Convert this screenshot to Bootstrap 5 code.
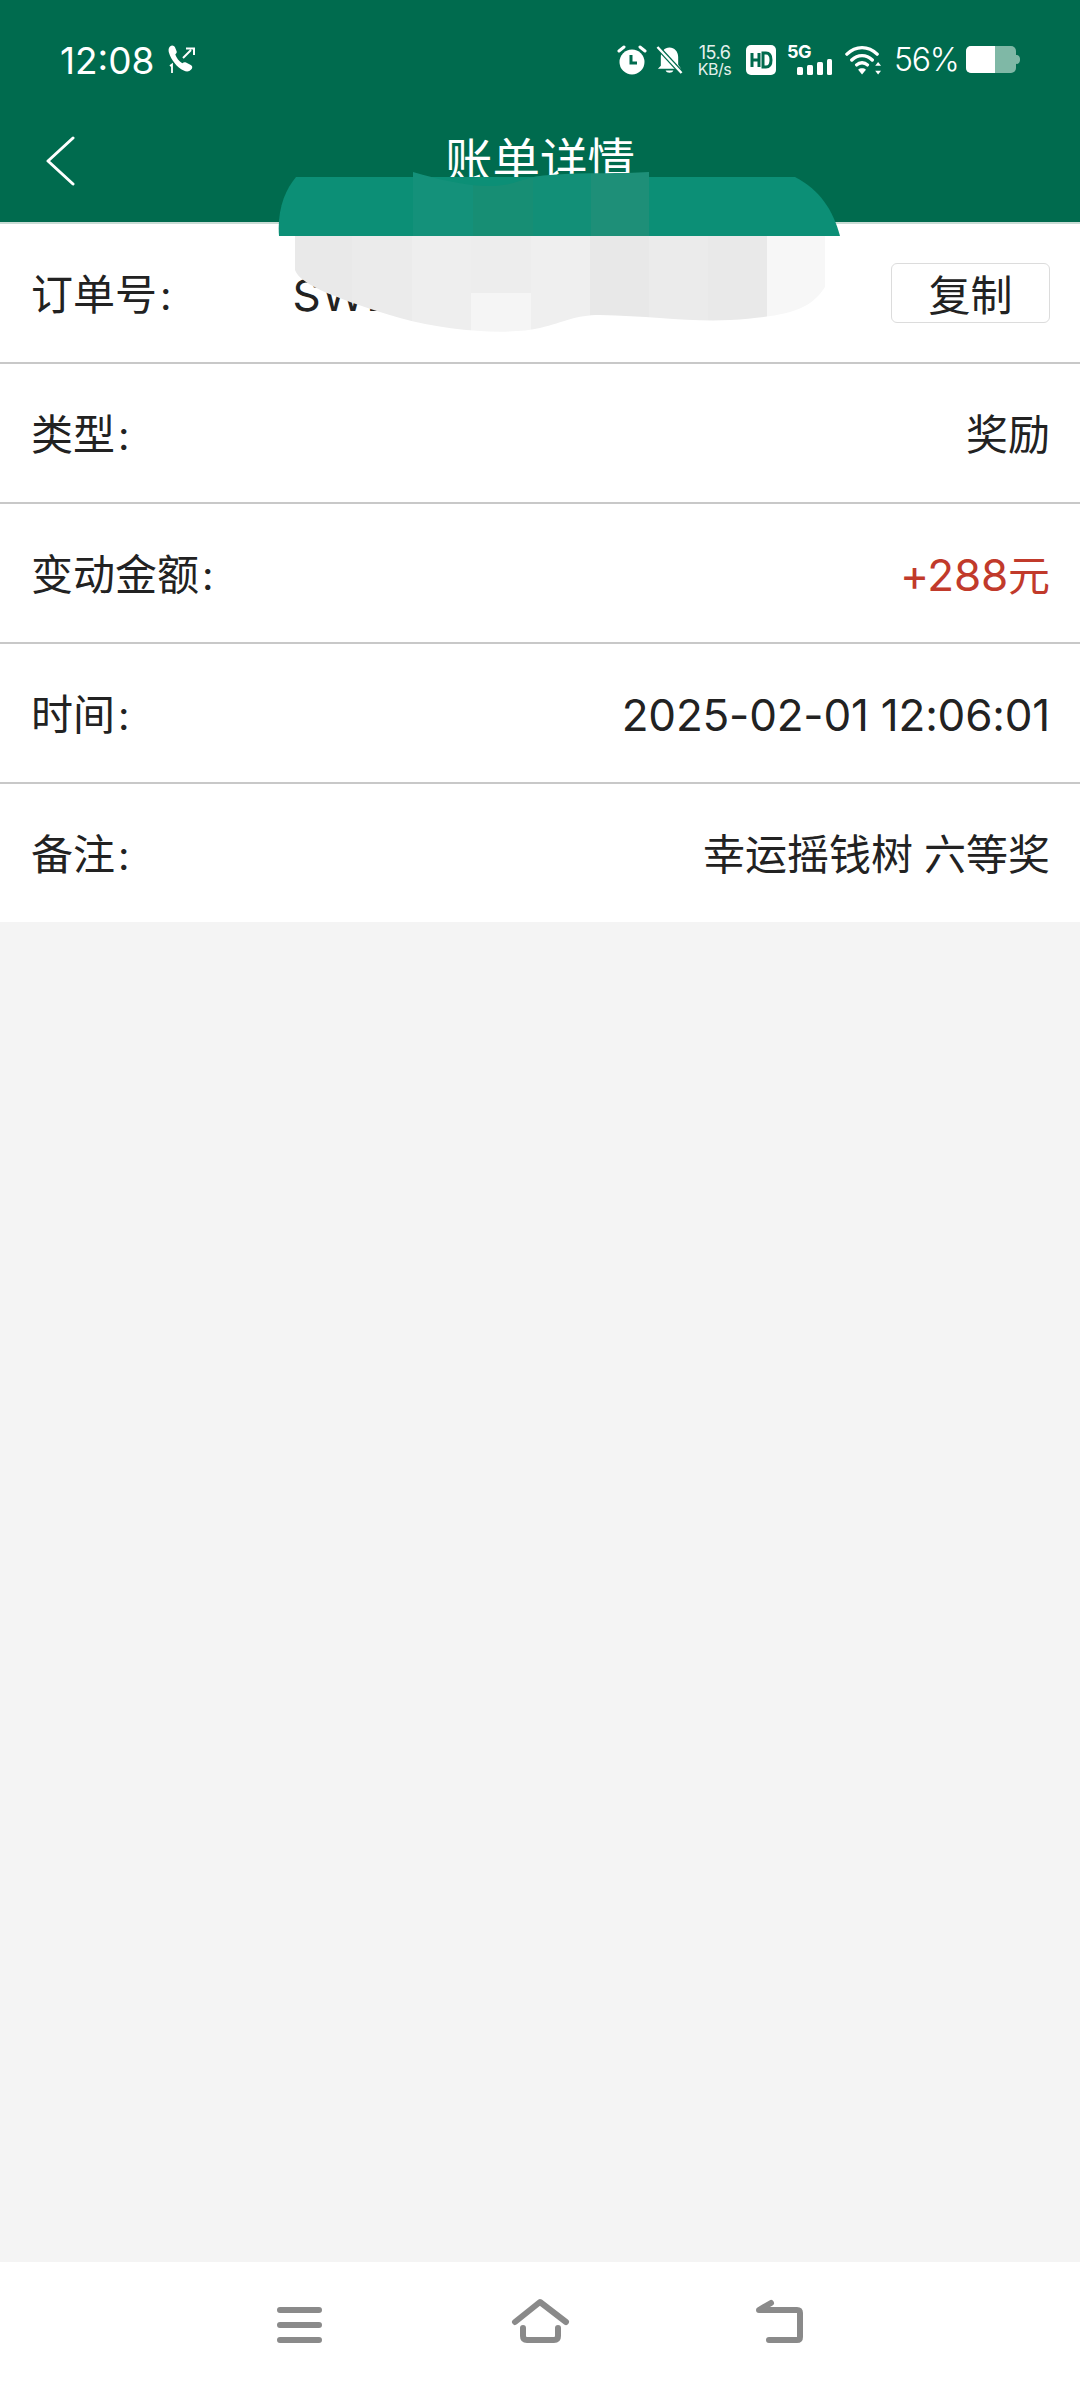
<!doctype html>
<html lang="zh-CN">
<head>
<meta charset="utf-8">
<title>账单详情</title>
<link rel="stylesheet" href="https://cdn.jsdelivr.net/npm/bootstrap@5.3.0/dist/css/bootstrap.min.css">
<style>
html,body{height:100%;margin:0}
body{background:#f4f4f4;font-family:Inter,"Noto Sans CJK SC",sans-serif;color:#222}
.shell{width:1080px;height:2388px;overflow:hidden}
.topbar{background:#006b4e;height:224px;border-bottom:2px solid #c9dcd5;color:#fff;flex:none}
.statusline{height:120px;padding:0 60px}
.clock{font-size:37px;line-height:1;width:92px;margin-right:16px;font-weight:400;white-space:nowrap}
.ic{display:block;flex:none}
.chev{margin-bottom:20px}
.gap9{margin-right:9px}.gap10{margin-right:10px}.gap11{margin-right:11px}.gap12{margin-right:12px}.gap13{margin-right:13px}.gap14{margin-right:14px}
.speed{font-size:18px;line-height:1;text-align:center;width:35px;color:#e4f0ec;white-space:nowrap;letter-spacing:-.5px}
.speed small{display:block;font-size:16px;margin-top:-1px}
.net{width:45px;height:30px}
.netlabel{font-size:18px;font-weight:700;line-height:14px;letter-spacing:-.5px}
.pct{font-size:32px;line-height:1;font-weight:300;width:62px;white-space:nowrap;letter-spacing:-1.200px}
.titleline{height:102px;padding-left:46px}
.pagetitle{font-size:47.500px;line-height:1;font-weight:400;margin:0;font-family:"Noto Sans CJK SC",sans-serif;left:0;right:0;text-align:center;position:absolute;top:14px}
.rows .list-group-item{height:140px;padding:0 30px 0 31px;font-size:42px;line-height:1;color:#222;border-color:#c8c8c8;border-width:0 0 2px;background:#fff;font-weight:400}
.rows .list-group-item:last-child{border-bottom:0;height:138px}
.rows .list-group-item>span{padding-top:4px;white-space:nowrap}
.colonmark{margin-left:3px;font-size:40px}
.num{font-size:44px;letter-spacing:-.2px}
.orderno{width:260px;margin-left:121px;font-size:44px;letter-spacing:1px}
.copybtn{width:159px;height:60px;padding:0;font-size:42px;line-height:1;color:#222;border:1.5px solid #dcdcdc;border-radius:6px;background:#fff;font-family:"Noto Sans CJK SC",sans-serif}
.plus{color:#c13a2b}
.wordgap{margin-left:11px}
.spacer{flex:1 1 auto}
.softnav{height:126px;background:#fff;flex:none}
.smudge{position:absolute;left:0;top:0;pointer-events:none}
</style>
</head>
<body>
<div class="shell position-relative d-flex flex-column">
  <header class="topbar">
    <div class="statusline d-flex align-items-center">
      <span class="clock">12:08</span>
      <svg class="ic" width="30" height="30" viewBox="0 0 30 30" fill="#fff"><path d="M2 1.500c2-1.800 4-1 5 .8l1.500 3.700c.6 1.500 0 2.500-1.200 3.500 1.200 3.500 3.700 6.700 7 8.800 1.200-1 2.400-1.300 3.700-.7l4.800 2.400c1.700.9 2 2.800.4 4.600-2 2.300-4.700 2.400-7.500 1C9 22.400 3 14.800.900 7.500.300 5 .500 3 2 1.500z"/><path d="M15 13l8-8M18 3.500H26V10" fill="none" stroke="#fff" stroke-width="2"/><path d="M2 21l2-1.500V28" fill="none" stroke="#fff" stroke-width="1.800"/></svg>
      <div class="ms-auto d-flex align-items-center">
        <svg class="ic gap9" width="30" height="30" viewBox="0 0 30 30"><circle cx="15" cy="17" r="12.500" fill="#fff"/><path d="M14 10v8h6" fill="none" stroke="#006b4e" stroke-width="3"/><path d="M2 6l5-4M28 6l-5-4" stroke="#fff" stroke-width="3" stroke-linecap="round"/></svg>
        <svg class="ic gap14" width="27" height="30" viewBox="0 0 28 30"><path d="M14 2c5 0 9 4 9 10v8l3 4H2l3-3V12C5 6 9 2 14 2zM10 26h8c-1 3-7 3-8 0z" fill="#fff"/><path d="M2 2l25 27" stroke="#006b4e" stroke-width="5"/><path d="M1.500 1.500l25 27" stroke="#fff" stroke-width="2.500"/></svg>
        <div class="speed gap14">15.6<small>KB/s</small></div>
        <svg class="ic gap11" width="30" height="30" viewBox="0 0 30 30"><rect width="30" height="30" rx="5" fill="#fff"/><path d="M6 8v14M13 8v14M6 15h7" stroke="#006b4e" stroke-width="3" fill="none"/><path d="M17 8v14h3c4 0 5-3 5-7s-1-7-5-7z" stroke="#006b4e" stroke-width="3" fill="none"/></svg>
        <div class="net gap13 d-flex flex-column">
          <span class="netlabel align-self-start">5G</span>
          <svg class="ic align-self-end" width="35" height="16" viewBox="0 0 35 16" fill="#fff"><rect x="0" y="8" width="6" height="8" rx="1.500"/><rect x="10" y="6" width="6" height="10" rx="1.500"/><rect x="20" y="3" width="6" height="13" rx="1.500"/><rect x="30" y="0" width="5" height="16" rx="1.500"/></svg>
        </div>
        <svg class="ic gap12" width="37" height="30" viewBox="0 0 38 30" fill="none" stroke="#fff" stroke-width="3.500" stroke-linecap="round"><path d="M2 9c9-9 22-9 31 0M7 15c6-6 15-6 21 0M12 20c3-3 8-3 11 0"/><path d="M17.500 30l-4-5c2-2 6-2 8 0z" fill="#fff" stroke="none"/><path d="M34 17l-3 4h6zM34 30l-3-4h6z" fill="#fff" stroke="none"/></svg>
        <span class="pct gap10">56%</span>
        <svg class="ic" width="54" height="28" viewBox="0 0 54 28"><rect x="0" y="0" width="50" height="27" rx="5" fill="#7fb8a6"/><path d="M5 0h24v27H5a5 5 0 0 1-5-5V5a5 5 0 0 1 5-5z" fill="#fff"/><path d="M50 9c3 0 4 2 4 4.500s-1 4.500-4 4.500z" fill="#7fb8a6"/></svg>
      </div>
    </div>
    <div class="titleline d-flex align-items-center position-relative">
      <svg class="ic chev" width="30" height="50" viewBox="0 0 30 50" fill="none" stroke="#fff" stroke-width="3" stroke-linecap="round" stroke-linejoin="round"><path d="M27 2 2 25l25 23"/></svg>
      <h1 class="pagetitle">账单详情</h1>
    </div>
  </header>
  <div class="list-group list-group-flush rows">
    <div class="list-group-item d-flex align-items-center">
      <span>订单号<i class="colonmark fst-normal">:</i></span><span class="orderno">SWE</span>
      <button type="button" class="btn copybtn ms-auto">复制</button>
    </div>
    <div class="list-group-item d-flex justify-content-between align-items-center"><span>类型<i class="colonmark fst-normal">:</i></span><span>奖励</span></div>
    <div class="list-group-item d-flex justify-content-between align-items-center"><span>变动金额<i class="colonmark fst-normal">:</i></span><span class="plus"><i class="num fst-normal">+288</i>元</span></div>
    <div class="list-group-item d-flex justify-content-between align-items-center"><span>时间<i class="colonmark fst-normal">:</i></span><span class="num">2025-02-01 12:06:01</span></div>
    <div class="list-group-item d-flex justify-content-between align-items-center"><span>备注<i class="colonmark fst-normal">:</i></span><span>幸运摇钱树<i class="wordgap fst-normal">六等奖</i></span></div>
  </div>
  <div class="spacer"></div>
  <nav class="softnav d-flex justify-content-center">
    <svg width="1080" height="126" viewBox="0 2262 1080 126" fill="none" stroke="#8a8a8a" stroke-width="6" stroke-linecap="round" stroke-linejoin="round">
      <path d="M280 2310h39M280 2325h39M280 2340h39"/>
      <path d="M515 2322l25-20 26 20"/>
      <path d="M523 2328v8q0 4 4 4h27q4 0 4-4v-8"/>
      <path d="M769 2340h28q3 0 3-3v-24q0-3-3-3h-38l12-7"/>
    </svg>
  </nav>
  <svg class="smudge" width="1080" height="340" viewBox="0 0 1080 340">
    <defs>
      <clipPath id="grayclip"><path d="M295 236V270C300 285 340 300 400 318C450 332 510 335 540 328C565 322 575 315 600 315C650 316 690 322 730 320C790 316 810 310 825 287V236z"/></clipPath>
      <clipPath id="bumpclip"><path d="M413 172C440 180 470 187 495 186C520 184 525 176 550 175C590 172 620 174 649 172V236H413z"/></clipPath>
    </defs>
    <g clip-path="url(#grayclip)">
      <rect x="295" y="236" width="57" height="100" fill="#e9e9e9"/>
      <rect x="352" y="236" width="60" height="100" fill="#ebebeb"/>
      <rect x="412" y="236" width="59" height="100" fill="#eeeeee"/>
      <rect x="471" y="236" width="60" height="57" fill="#ededed"/>
      <rect x="471" y="293" width="60" height="43" fill="#f5f5f5"/>
      <rect x="531" y="236" width="59" height="100" fill="#efefef"/>
      <rect x="590" y="236" width="59" height="100" fill="#e8e8e8"/>
      <rect x="649" y="236" width="59" height="100" fill="#ebebeb"/>
      <rect x="708" y="236" width="59" height="100" fill="#e9e9e9"/>
      <rect x="767" y="236" width="58" height="100" fill="#f7f7f7"/>
    </g>
    <path d="M296 177H795C820 190 833 210 840 236H279C277 210 285 190 296 177z" fill="#0c8f76"/>
    <g clip-path="url(#bumpclip)">
      <rect x="413" y="170" width="60" height="66" fill="#14917a"/>
      <rect x="473" y="170" width="60" height="66" fill="#178e74"/>
      <rect x="533" y="170" width="58" height="66" fill="#128f77"/>
      <rect x="591" y="170" width="58" height="66" fill="#1e8f78"/>
    </g>
  </svg>
</div>
<script src="https://cdn.jsdelivr.net/npm/bootstrap@5.3.0/dist/js/bootstrap.bundle.min.js"></script>
</body>
</html>
